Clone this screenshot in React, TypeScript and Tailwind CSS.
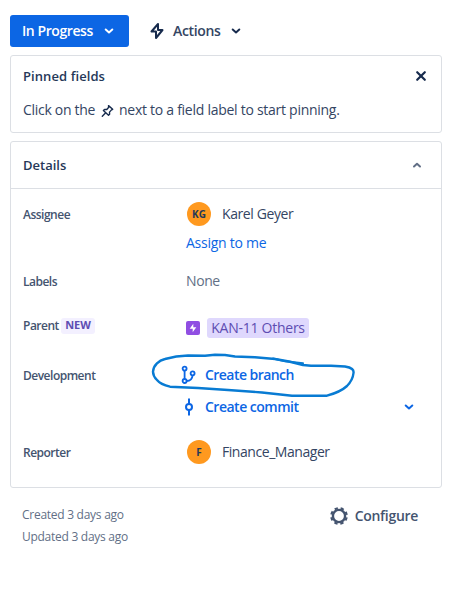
import type { ReactNode } from "react";

function Chevron({ className = "", up = false }: { className?: string; up?: boolean }) {
  return (
    <svg width="10" height="8" viewBox="0 0 10 8" fill="none" className={className}>
      <path
        d={up ? "M2 5.5 5 2.8 8 5.5" : "M1.7 2.5 5 5.4 8.3 2.5"}
        stroke="currentColor"
        strokeWidth="2"
        strokeLinecap="round"
        strokeLinejoin="round"
      />
    </svg>
  );
}

function Row({ label, className, children }: { label: ReactNode; className: string; children: ReactNode }) {
  return (
    <div className={`flex ${className}`}>
      <div className="flex h-[25px] w-[163px] shrink-0 items-center text-xs font-semibold tracking-[-0.5px] text-[#44546f]">
        {label}
      </div>
      <div className="flex-1 text-sm">{children}</div>
    </div>
  );
}

function Avatar({ initials }: { initials: string }) {
  return (
    <span className="ml-[1px] flex size-6 items-center justify-center rounded-full bg-[#ff991f] text-[10px] font-bold text-[#253858]">
      {initials}
    </span>
  );
}

export default function App() {
  return (
    <div className="h-[589px] w-[455px] overflow-hidden bg-white pt-[15px] pl-[10px] font-['Open_Sans','Noto_Sans',sans-serif] text-sm text-[#172b4d]">
      <div className="flex h-8 items-center font-semibold">
        <button className="flex h-8 w-[119px] items-center rounded-[3px] bg-[#0c66e4] pl-3 text-white">
          <span className="w-[82px] text-left tracking-[-0.42px] whitespace-nowrap">In Progress</span>
          <Chevron />
        </button>
        <button className="ml-[20px] flex items-center text-[#344563]">
          <svg width="16" height="20" viewBox="0 0 16 20" fill="none" className="text-[#172b4d]">
            <path d="M9 3 2.5 10.5H7V17l6.5-8H9Z" stroke="currentColor" strokeWidth="2" strokeLinejoin="round" />
          </svg>
          <span className="ml-[8px] w-[58px] text-left tracking-[-0.35px]">Actions</span>
          <Chevron className="text-[#172b4d]" />
        </button>
      </div>

      <section className="mt-2 h-[78px] w-[432px] rounded-[3px] border border-[#dcdfe4] pr-[14px] pl-3">
        <div className="flex h-[40px] items-center justify-between">
          <h2 className="text-[13px] font-semibold tracking-[0.08px] text-[#253858]">Pinned fields</h2>
          <svg width="12" height="12" viewBox="0 0 12 12" fill="none">
            <path d="m2.2 2.2 7.6 7.6m0-7.6-7.6 7.6" stroke="currentColor" strokeWidth="2.2" strokeLinecap="round" />
          </svg>
        </div>
        <p className="flex h-7 items-center whitespace-nowrap text-[#344563]">
          <span className="w-[77px] tracking-[-0.3px]">Click on the</span>
          <svg width="15" height="14" viewBox="0 0 15 14" fill="none" className="mt-[2px] mr-[4px] text-[#172b4d]">
            <path
              d="m8.5 1.6 4.2 3.7-1.2.6-2 2.2.1 2.1-1.1 1L3.4 6.4l1.1-1 2.3.1 1.9-2.2ZM5.7 8.8 2.3 12.3"
              stroke="currentColor"
              strokeWidth="1.4"
              strokeLinecap="round"
              strokeLinejoin="round"
            />
          </svg>
          <span className="tracking-[-0.27px]">next to a field label to start pinning.</span>
        </p>
      </section>

      <section className="mt-2 h-[347px] w-[432px] rounded-[3px] border border-[#dcdfe4]">
        <div className="flex h-[47px] items-center justify-between border-b border-[#dcdfe4] pr-[19px] pl-3">
          <h2 className="text-[13px] font-semibold text-[#253858]">Details</h2>
          <Chevron up className="text-[#626f86]" />
        </div>
        <div className="pt-[13px] pl-3">
          <Row label="Assignee" className="h-[67px]">
            <div className="flex h-6 items-center text-[#344563]">
              <Avatar initials="KG" />
              <span className="ml-[11px] tracking-[-0.4px]">Karel Geyer</span>
            </div>
            <div className="mt-[7px] leading-5 tracking-[-0.25px] text-[#0c66e4]">Assign to me</div>
          </Row>
          <Row label={<span className="pt-[1px]">Labels</span>} className="h-[45px]">
            <div className="leading-6 tracking-[-0.4px] text-[#626f86]">None</div>
          </Row>
          <Row
            label={
              <div className="flex h-[23px] items-center self-start">
                <span className="w-[35px]">Parent</span>
                <span className="ml-[3px] flex h-4 w-[34px] items-center justify-center rounded-[3px] bg-[#f3f0ff] text-[11px] font-bold tracking-normal text-[#5e4db2]">
                  NEW
                </span>
              </div>
            }
            className="h-[49px]"
          >
            <div className="flex h-7 items-center">
              <svg width="14" height="14" viewBox="0 0 14 14">
                <rect width="14" height="14" rx="2" fill="#904ee2" />
                <path d="M7.3 2.8v3.4h3L6.7 11.2V7.8h-3Z" fill="white" />
              </svg>
              <span className="ml-[7px] flex h-5 w-[102px] items-center justify-center rounded-[3px] bg-[#dfd8fd] tracking-[-0.25px] whitespace-nowrap text-[#5e4db2]">
                KAN-11 Others
              </span>
            </div>
          </Row>
          <Row label="Development" className="h-[77px]">
            <div className="relative flex h-6 items-center font-semibold text-[#0c66e4]">
              <svg width="16" height="20" viewBox="0 0 16 20" fill="none" className="-ml-[5px]" stroke="currentColor" strokeWidth="1.8">
                <circle cx="3.6" cy="3.6" r="2" />
                <circle cx="3.6" cy="16" r="2" />
                <circle cx="11.6" cy="8.3" r="2" />
                <path d="M3.6 5.6V14m2 2c4 0 5.6-1.8 6-5.7" />
              </svg>
              <span className="ml-[8px] tracking-[-0.55px]">Create branch</span>
              <svg
                width="208"
                height="46"
                viewBox="0 0 208 46"
                fill="none"
                className="pointer-events-none absolute -top-[10px] -left-[35px] max-w-none"
              >
                <path
                  d="M2 18.7C2.5 12 8 7.5 14 6Q25 2.8 37 2.5L54 2.7 64 1.7 74 2 84 3.5 104 4.3 124 6 138 8.5 152 12 160 12.7H180L194 13.5C201 14.5 203 17 202.5 20C202 25 200 29 196 33C190 38.5 184 40.5 176 42.7H141L111 39.5 77 37 47 35 19 33.7C12 32 8 29.5 6 27 3.5 24.5 2 22 2 18.7Z"
                  stroke="#087bd3"
                  strokeWidth="2.4"
                  strokeLinejoin="round"
                />
                <path d="m122 5.5 12 2.8 18 2" stroke="#087bd3" strokeWidth="2" strokeLinecap="round" />
              </svg>
            </div>
            <div className="mt-2 flex h-6 items-center font-semibold text-[#0c66e4]">
              <svg width="10" height="18" viewBox="0 0 10 18" fill="none" className="-ml-[2px]" stroke="currentColor" strokeWidth="2">
                <circle cx="5" cy="9" r="3" />
                <path d="M5 .5V6m0 6v5.5" />
              </svg>
              <span className="ml-[11px] tracking-[-0.5px]">Create commit</span>
              <Chevron className="mr-[27px] ml-auto" />
            </div>
          </Row>
          <Row label="Reporter" className="h-6">
            <div className="flex h-6 items-center text-[#344563]">
              <Avatar initials="F" />
              <span className="ml-[11px] tracking-[-0.45px]">Finance_Manager</span>
            </div>
          </Row>
        </div>
      </section>

      <footer className="flex w-[432px] justify-between pt-4 pr-[24px] pl-3">
        <div className="text-xs leading-[22px] tracking-[-0.27px] text-[#626f86]">
          <div>Created 3 days ago</div>
          <div>Updated 3 days ago</div>
        </div>
        <div className="flex h-6 items-center font-semibold text-[#44546f]">
          <svg width="20" height="20" viewBox="0 0 20 20" fill="none" stroke="currentColor" className="-ml-[1px]">
            <circle cx="10" cy="10" r="6.1" strokeWidth="2.4" />
            <circle cx="10" cy="10" r="7.8" strokeWidth="2.1" strokeDasharray="3.3 2.826" strokeDashoffset="-1.4" />
          </svg>
          <span className="ml-[6px] tracking-[-0.3px]">Configure</span>
        </div>
      </footer>
    </div>
  );
}
